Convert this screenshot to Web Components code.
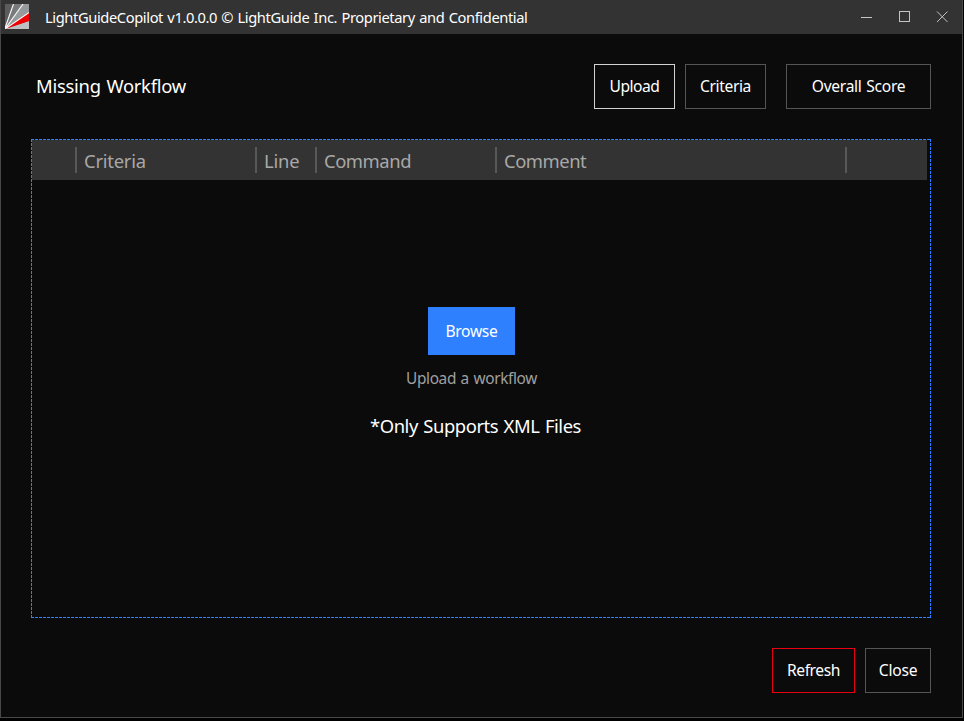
<!DOCTYPE html>
<html lang="en"><head><meta charset="utf-8"><title>LightGuideCopilot</title>
<style>html,body{margin:0;background:#000;overflow:hidden}body{font-family:"Noto Sans","Open Sans",sans-serif}</style></head>
<body><app-window></app-window>
<script>
const define=(name,html,after)=>customElements.define(name,class extends HTMLElement{
  connectedCallback(){
    if(this.shadowRoot)return;
    const t=document.createElement('template');t.innerHTML=html;
    this.attachShadow({mode:'open'}).append(t.content.cloneNode(true));
    if(after)after(this);
  }
});

// A single line of text tracked so that it fills the width given in pixels.
define('text-line',`<style>:host{display:block;white-space:pre;line-height:24px;flex:none}span{display:inline-block;font-kerning:normal;font-variant-ligatures:none;word-spacing:.06em}</style><span></span>`,el=>{
  const s=el.shadowRoot.querySelector('span'),text=el.getAttribute('text'),w=+el.getAttribute('width');
  s.textContent=text;el.style.width=w+'px';
  s.style.letterSpacing=((w-s.getBoundingClientRect().width)/text.length)+'px';
});

define('app-logo',`<style>:host{display:block;width:24px;height:25px}svg{display:block}</style>
<svg width="24" height="25" viewBox="0 0 24 25"><rect width="24" height="25" fill="#5c5c5e"/>
<path d="M0 25L9 0H18Z" fill="#77797b"/><path d="M0 25L18 0H24V8Z" fill="#959a9d"/>
<path d="M0 25L24 17V25Z" fill="#bfc1c2"/><path d="M0 25L24 8V17Z" fill="#f00000"/>
<path d="M0 24L8.5 0M0 25L18 0M0 25L24 8.5" stroke="#f5f5f5" stroke-width="1.2" fill="none"/></svg>`);

define('window-controls',`<style>:host{display:block}svg{display:block}</style>
<svg width="90" height="14" fill="none" stroke="#c4c4c4"><path d="M1 7.5H12"/><rect x="39.5" y="1.5" width="10" height="10"/><path d="M77 1.5L87.5 12M87.5 1.5L77 12"/></svg>`);

define('title-bar',`<style>:host{display:flex;height:34px;background:#333;box-sizing:border-box;padding:4px 12px 0 4px;align-items:flex-start}
text-line{font-size:14.7px;color:#fff;margin:1px 0 0 16px}window-controls{margin:6px 0 0 auto}</style>
<app-logo></app-logo><text-line width="482.5" text="LightGuideCopilot v1.0.0.0 © LightGuide Inc. Proprietary and Confidential"></text-line><window-controls></window-controls>`);

define('push-button',`<style>:host{display:flex;box-sizing:border-box;height:45px;border:1px solid #555;padding-bottom:1px;align-items:center;justify-content:center;color:#fff;font-size:15.6px}
:host([tone=active]){border-color:#d2d2d2}:host([tone=danger]){border-color:#e60012}
:host([tone=primary]){height:48px;border:0;background:#2f80ff}</style><slot></slot>`);

define('header-cell',`<style>:host{display:flex;box-sizing:border-box;height:26px;border-right:2px solid #585858;padding-left:7px;color:#a8a8a8;font-size:18.4px}
text-line{margin-top:2px}</style><slot></slot>`);

define('table-header',`<style>:host{display:grid;grid-template-columns:45px 180px 60px 180px 350px;box-sizing:border-box;width:895px;height:40px;padding-top:7px;background:#333}
text-line{margin-top:2px}</style>
<header-cell></header-cell>
<header-cell><text-line width="61.8" text="Criteria"></text-line></header-cell>
<header-cell><text-line width="35.6" text="Line"></text-line></header-cell>
<header-cell><text-line width="87" text="Command"></text-line></header-cell>
<header-cell><text-line width="82.2" text="Comment"></text-line></header-cell>`);

define('drop-zone',`<style>:host{display:flex;flex-direction:column;box-sizing:border-box;width:900px;height:479px;padding:1px;
--h:repeating-linear-gradient(90deg,#2f80ff 0 3px,transparent 3px 4px);--v:repeating-linear-gradient(180deg,#2f80ff 0 3px,transparent 3px 4px);
background:var(--h) 0 0/100% 1px no-repeat,var(--h) 0 100%/100% 1px no-repeat,var(--v) 0 0/1px 100% no-repeat,var(--v) 100% 0/1px 100% no-repeat}
.body{display:flex;flex-direction:column;align-items:flex-start;padding-top:127px}
push-button{width:87px;margin-left:396px}
.hint{font-size:15.4px;color:#a0a0a0;margin:12px 0 0 374px}.note{font-size:18.4px;color:#fff;margin:23px 0 0 338px}</style>
<table-header></table-header><div class="body">
<push-button tone="primary"><text-line width="52" text="Browse"></text-line></push-button>
<text-line class="hint" width="131" text="Upload a workflow"></text-line>
<text-line class="note" width="211" text="*Only Supports XML Files"></text-line></div>`);

define('app-window',`<style>:host{display:block;box-sizing:border-box;width:963px;height:718px;border:1px solid #484848;border-top:0;background:#0b0b0b}
main{padding:30px 31px 0 30px}.top{display:flex;align-items:center;height:45px;margin-bottom:30px}
.top>text-line{font-size:18.4px;color:#fff;margin:0 auto 2px 5px}.top push-button{width:81px;margin-left:10px}.top push-button:last-child{width:145px;margin-left:20px}
.bottom{display:flex;justify-content:flex-end;gap:10px;margin-top:30px}.bottom push-button{width:83px}.bottom push-button:last-child{width:66px}</style>
<title-bar></title-bar><main><div class="top"><text-line width="150" text="Missing Workflow"></text-line>
<push-button tone="active"><text-line width="50" text="Upload"></text-line></push-button>
<push-button><text-line width="51" text="Criteria"></text-line></push-button>
<push-button><text-line width="93.5" text="Overall Score"></text-line></push-button></div>
<drop-zone></drop-zone>
<div class="bottom"><push-button tone="danger"><text-line width="53" text="Refresh"></text-line></push-button>
<push-button><text-line width="38.5" text="Close"></text-line></push-button></div></main>`);
</script></body></html>
